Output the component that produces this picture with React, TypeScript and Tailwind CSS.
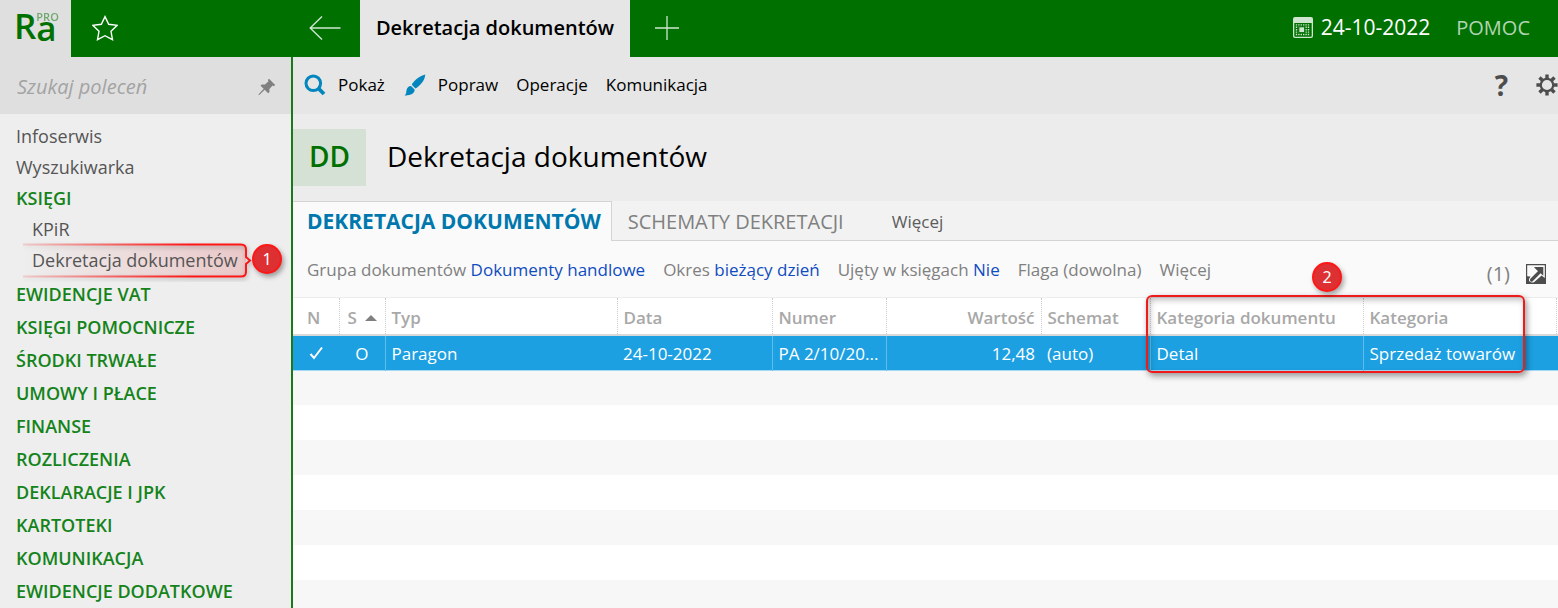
import type { ReactNode } from "react";

const topLinks = ["Infoserwis", "Wyszukiwarka"];

const sections = [
  "EWIDENCJE VAT",
  "KSIĘGI POMOCNICZE",
  "ŚRODKI TRWAŁE",
  "UMOWY I PŁACE",
  "FINANSE",
  "ROZLICZENIA",
  "DEKLARACJE I JPK",
  "KARTOTEKI",
  "KOMUNIKACJA",
  "EWIDENCJE DODATKOWE",
];

const filters = [
  { label: "Grupa dokumentów", value: "Dokumenty handlowe" },
  { label: "Okres", value: "bieżący dzień" },
  { label: "Ujęty w księgach", value: "Nie" },
  { label: "Flaga (dowolna)" },
  { label: "Więcej" },
];

const emptyRows = [1, 2, 3, 4, 5, 6, 7];

const StarIcon = () => (
  <svg width="26" height="26" viewBox="0 0 26 26" fill="none" stroke="#fff" strokeWidth="1.4">
    <path d="M13 1.6 16.7 9.3 25 10.4 19 16.3 20.5 24.6 13 20.7 5.5 24.6 7 16.3 1 10.4 9.3 9.3Z" />
  </svg>
);

const BackIcon = () => (
  <svg width="32" height="24" viewBox="0 0 32 24" fill="none" stroke="#cfe5cf" strokeWidth="1.4">
    <path d="M13 .5 1.2 12 13 23.5M1.2 12H31.5" />
  </svg>
);

const PlusIcon = () => (
  <svg width="24" height="24" viewBox="0 0 24 24" fill="none" stroke="#cfe5cf" strokeWidth="1.3">
    <path d="M12 0v24M0 12h24" />
  </svg>
);

const CalendarIcon = () => (
  <svg width="20" height="21" viewBox="0 0 20 21">
    <rect width="20" height="21" rx="2" fill="#cfe5cf" />
    <path d="M1.3 6h17.4v12.7a1 1 0 0 1-1 1H2.3a1 1 0 0 1-1-1z" fill="#007100" />
    <path
      d="M2.8 7.9h14.4M2.8 10.3h14.4M2.8 12.7h14.4M2.8 15.1h14.4M2.8 17.5h14.4"
      stroke="#cfe5cf"
      strokeWidth="1.4"
      strokeDasharray="1.4 1"
    />
    <rect x="5.2" y="9.3" width="7" height="6.8" fill="#007100" />
    <rect x="6.3" y="10.3" width="4.8" height="4.8" fill="#cfe5cf" />
  </svg>
);

const PinIcon = () => (
  <svg width="18" height="18" viewBox="0 0 18 18" fill="#808080">
    <path d="M11 .8 17.2 7 15.8 8.2 14.6 7.6 11.4 11 11.5 14 10.2 15.2 6.7 11.8 1.5 16.8.4 17.3.8 16 5.7 10.8 2.5 7.7 3.8 6.5 7 6.5 10.5 3.3 9.9 2Z" />
  </svg>
);

const SearchIcon = () => (
  <svg width="22" height="22" viewBox="0 0 22 22" fill="none" stroke="#0385be" strokeWidth="3">
    <circle cx="9.3" cy="9.3" r="7.3" />
    <path d="M14.4 14.4 20 20" strokeWidth="3.8" />
  </svg>
);

const BrushIcon = () => (
  <svg width="22" height="22" viewBox="0 0 22 22" fill="#0385be">
    <path d="M21.3.4C15 2.300 9.500 6.500 7.800 10.800L11.400 14.400C16 11.800 20.800 6.500 21.300.4Z" />
    <path d="M7 11.900 10.600 15.500C10.900 19.800 5.800 21.800.4 21.400 2.700 20 2 18 2.700 15.400 3.500 13 5 11.700 7 11.900Z" />
  </svg>
);

const GearIcon = () => (
  <svg width="22" height="22" viewBox="0 0 22 22" fill="none" stroke="#4d4d4d">
    <circle cx="11" cy="11" r="6.2" strokeWidth="2.2" />
    <path
      strokeWidth="3.4"
      d="M11 .4v4M11 17.6v4M.4 11h4M17.6 11h4M3.5 3.5l2.8 2.8M15.7 15.7l2.8 2.8M3.5 18.5l2.8-2.8M15.7 6.3l2.8-2.8"
    />
  </svg>
);

const ExpandIcon = () => (
  <svg width="20" height="20" viewBox="0 0 20 20">
    <rect width="20" height="20" fill="#4d4d4d" />
    <path d="M1.2 1.2H18.8V14L15.6 11.5 8 18.2Q4.5 19.5 3 16.8 2.6 14.8 4.5 12.5L1.2 12.2Z" fill="#fafafa" />
    <path d="M5.5 16 13.5 8" fill="none" stroke="#4d4d4d" strokeWidth="3.2" strokeLinecap="round" />
    <path d="M8 3H17.3V11.8L14.8 9.5 10.2 5.6Z" fill="#4d4d4d" />
  </svg>
);

const Badge = ({ children }: { children: ReactNode }) => (
  <span className="flex size-[30px] items-center justify-center rounded-full border-2 border-[#ff1616] bg-[#dc3033] font-['Noto_Sans',sans-serif] text-base text-white shadow-[2px_3px_5px_rgba(0,0,0,0.35)]">
    {children}
  </span>
);

const Callout = () => (
  <svg
    className="absolute -top-1 left-[22px]"
    width="236"
    height="42"
    viewBox="0 0 236 42"
    fill="none"
    aria-hidden="true"
  >
    <defs>
      <linearGradient id="line" gradientUnits="userSpaceOnUse" x1="0" y1="0" x2="225" y2="0">
        <stop offset="0" stopColor="#ff1616" stopOpacity="0.15" />
        <stop offset="0.75" stopColor="#ff1616" />
      </linearGradient>
      <linearGradient id="fill" gradientUnits="userSpaceOnUse" x1="0" y1="0" x2="225" y2="0">
        <stop offset="0" stopColor="#dc3033" stopOpacity="0" />
        <stop offset="1" stopColor="#dc3033" stopOpacity="0.2" />
      </linearGradient>
    </defs>
    <path d="M1 4.500H219Q224 4.500 224 9.500V32Q224 36.500 219 36.500H1Z" fill="url(#fill)" />
    <g className="drop-shadow-[1px_2px_2px_rgba(0,0,0,0.3)]">
      <path
        d="M1 4.500H219Q224 4.500 224 9.500V17L228 20.500 224 24V32Q224 36.500 219 36.500H1"
        stroke="url(#line)"
        strokeWidth="2"
      />
    </g>
  </svg>
);

const Sidebar = () => (
  <aside className="w-[291px] shrink-0 bg-[#eeeeee]">
    <div className="flex h-[57px] items-center justify-between bg-[#dfdfdf] pt-0.5 pr-[15px] pl-[17px]">
      <input
        type="search"
        aria-label="Szukaj poleceń"
        placeholder="Szukaj poleceń"
        className="min-w-0 flex-1 bg-transparent text-xl italic outline-none placeholder:text-[#a3a3a3]"
      />
      <button type="button" aria-label="Przypnij">
        <PinIcon />
      </button>
    </div>
    <nav className="pt-1.5 text-lg text-[#555555]">
      {topLinks.map((name) => (
        <a key={name} href="#" className="flex h-[31px] items-center pl-4">
          {name}
        </a>
      ))}
      <a href="#" className="flex h-[31px] items-center pl-4 font-semibold text-[#14831a]">
        KSIĘGI
      </a>
      <a href="#" className="flex h-[31px] items-center pl-8">
        KPiR
      </a>
      <div className="relative mb-0.5">
        <Callout />
        <a href="#" className="relative flex h-[31px] items-center pl-8">
          Dekretacja dokumentów
        </a>
        <div className="absolute top-0 right-[9px]">
          <Badge>1</Badge>
        </div>
      </div>
      {sections.map((name) => (
        <a key={name} href="#" className="flex h-[33px] items-center pl-4 font-semibold text-[#14831a]">
          {name}
        </a>
      ))}
    </nav>
  </aside>
);

const Header = () => (
  <header className="flex h-[57px] items-center bg-[#007100]">
    <div className="flex h-full w-[71px] shrink-0 bg-[#dfdfdf] pl-3.5 font-semibold text-[#007100]">
      <span className="pt-2 text-[35px] leading-[35px]">R</span>
      <span className="flex flex-col pt-3">
        <span className="text-[11px] leading-[9px] opacity-50">PRO</span>
        <span className="text-[35px] leading-[14px]">a</span>
      </span>
    </div>
    <button type="button" aria-label="Ulubione" className="ml-[21px] pb-0.5">
      <StarIcon />
    </button>
    <button type="button" aria-label="Wstecz" className="ml-[191px] pb-0.5">
      <BackIcon />
    </button>
    <a
      href="#"
      className="ml-[19px] flex h-full w-[270px] items-center justify-center bg-[#e6e6e6] pb-0.5 text-xl font-semibold text-black"
    >
      Dekretacja dokumentów
    </a>
    <button type="button" aria-label="Nowa karta" className="ml-[25px] pb-0.5">
      <PlusIcon />
    </button>
    <div className="ml-auto flex items-center pr-7 pb-0.5">
      <button type="button" className="flex items-center gap-2 text-[21px] text-white">
        <CalendarIcon />
        24-10-2022
      </button>
      <a href="#" className="ml-[26px] text-xl text-[#b3d4b3]">
        POMOC
      </a>
    </div>
  </header>
);

const Toolbar = () => (
  <div className="flex h-[57px] items-center bg-[#e6e6e6] pb-0.5 pl-[11px] text-[17px] text-black">
    <button type="button" className="flex items-center gap-3">
      <SearchIcon />
      Pokaż
    </button>
    <button type="button" className="ml-[19px] flex items-center gap-3">
      <BrushIcon />
      Popraw
    </button>
    <button type="button" className="ml-[18px]">
      Operacje
    </button>
    <button type="button" className="ml-[18px]">
      Komunikacja
    </button>
    <button type="button" aria-label="Pomoc" className="ml-auto text-[28px] font-bold text-[#4d4d4d]">
      ?
    </button>
    <button type="button" aria-label="Ustawienia" className="ml-7">
      <GearIcon />
    </button>
  </div>
);

const Tabs = () => (
  <nav className="flex h-10 bg-[#f2f2f2]">
    <a
      href="#"
      className="flex items-center border-t border-r border-[#d4d4d4] bg-[#fafafa] pr-2.5 pl-3.5 text-[21px] font-bold text-[#0078ad]"
    >
      DEKRETACJA DOKUMENTÓW
    </a>
    <div className="flex flex-1 items-center border-b border-[#d4d4d4] pt-0.5 pl-4">
      <a href="#" className="text-xl text-[#808080]">
        SCHEMATY DEKRETACJI
      </a>
      <a href="#" className="ml-12 text-[17px] text-[#5c5c5c]">
        Więcej
      </a>
    </div>
  </nav>
);

const Filters = () => (
  <div className="flex h-14 items-center bg-[#fafafa] pt-0.5 pr-3 pl-3.5 text-[17px] text-[#808080]">
    <div className="flex gap-[18px]">
      {filters.map((filter) => (
        <button key={filter.label} type="button">
          {filter.label}
          {filter.value && <span className="text-[#0f4cc0]"> {filter.value}</span>}
        </button>
      ))}
    </div>
    <span className="mt-2 ml-auto text-xl">(1)</span>
    <button type="button" aria-label="Powiększ" className="mt-2 ml-4">
      <ExpandIcon />
    </button>
  </div>
);

const Th = ({ children, className = "pl-1.5" }: { children?: ReactNode; className?: string }) => (
  <th className={`border-r border-dotted border-[#cccccc] pt-[3px] pr-1.5 text-left font-semibold ${className}`}>
    {children}
  </th>
);

const DocumentsTable = () => (
  <div className="relative flex-1 border-t border-[#ececec] bg-white">
    <table className="w-full table-fixed text-[17px] whitespace-nowrap">
      <colgroup>
        <col className="w-[46px]" />
        <col className="w-[46px]" />
        <col />
        <col className="w-[155px]" />
        <col className="w-[114px]" />
        <col className="w-[155px]" />
        <col className="w-[109px]" />
        <col className="w-[213px]" />
        <col className="w-[193px]" />
        <col className="w-[2px]" />
      </colgroup>
      <thead>
        <tr className="h-[37px] border-b-2 border-[#d9d9d9] text-[#a8a8a8]">
          <Th className="pl-3.5">N</Th>
          <Th className="pl-2">
            <span className="flex items-center gap-2">
              S
              <svg width="12" height="6" viewBox="0 0 12 6" fill="#808080" className="shrink-0">
                <path d="M6 0 12 6H0z" />
              </svg>
            </span>
          </Th>
          <Th>Typ</Th>
          <Th>Data</Th>
          <Th>Numer</Th>
          <th className="border-r border-dotted border-[#cccccc] pt-[3px] pr-1.5 text-right font-semibold">Wartość</th>
          <Th>Schemat</Th>
          <Th>Kategoria dokumentu</Th>
          <Th>Kategoria</Th>
          <th />
        </tr>
      </thead>
      <tbody>
        <tr className="h-[35px] border-b border-[#a4d8f3] bg-[#1ca0e2] text-white">
          <td className="pl-4">
            <svg width="15" height="14" viewBox="0 0 15 14" fill="none" stroke="#fff" strokeWidth="2">
              <path d="M1.5 8 5 12 13 1.5" />
            </svg>
          </td>
          <td className="border-r border-[#60bdeb] pt-0.5 text-center">O</td>
          <td className="px-1.5 pt-0.5">Paragon</td>
          <td className="border-r border-[#60bdeb] px-1.5 pt-0.5">24-10-2022</td>
          <td className="border-r border-[#60bdeb] px-1.5 pt-0.5">PA 2/10/20...</td>
          <td className="px-1.5 pt-0.5 text-right">12,48</td>
          <td className="border-r border-[#60bdeb] px-1.5 pt-0.5">(auto)</td>
          <td className="border-r border-[#60bdeb] px-1.5 pt-0.5">Detal</td>
          <td className="px-1.5 pt-0.5">Sprzedaż towarów</td>
          <td />
        </tr>
        {emptyRows.map((row) => (
          <tr key={row} className="h-[35px] odd:bg-white even:bg-[#f7f7f7]">
            <td colSpan={10} />
          </tr>
        ))}
      </tbody>
    </table>
    <div className="absolute -top-[3px] right-[33px] h-[78px] w-[379px] rounded-md border-2 border-[#f01a1a] shadow-[2px_3px_6px_rgba(0,0,0,0.4),inset_2px_3px_6px_rgba(0,0,0,0.25)]" />
    <div className="absolute -top-9 right-[216px]">
      <Badge>2</Badge>
    </div>
  </div>
);

export default function App() {
  return (
    <div className="flex min-h-screen flex-col font-['Open_Sans','Noto_Sans',sans-serif]">
      <Header />
      <div className="flex flex-1">
        <Sidebar />
        <main className="flex min-w-0 flex-1 flex-col border-l-2 border-[#1a7a1a] bg-[#ececec]">
          <Toolbar />
          <div className="flex items-center gap-[21px] py-[15px]">
            <div className="flex h-[57px] w-[73px] items-center justify-center bg-[#d5e1d5] pb-1 text-[28px] font-semibold text-[#007100]">
              DD
            </div>
            <h1 className="pb-1 text-[28px] text-black">Dekretacja dokumentów</h1>
          </div>
          <Tabs />
          <Filters />
          <DocumentsTable />
        </main>
      </div>
    </div>
  );
}
